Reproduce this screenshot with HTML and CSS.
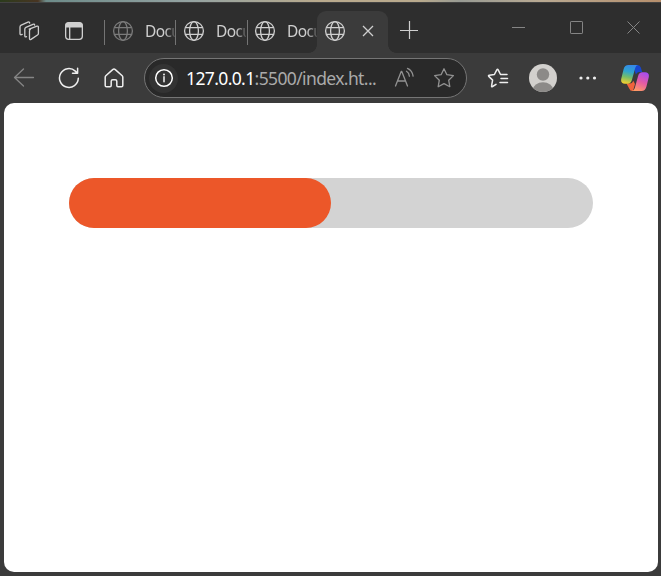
FILE: index.html
```html
<!DOCTYPE html>
<html lang="en">
<head>
<meta charset="utf-8">
<title>Document</title>
<link rel="stylesheet" href="styles.css">
</head>
<body>
<svg class="defs" aria-hidden="true">
  <symbol id="globe" viewBox="0 0 22 22"><g fill="none" stroke="currentColor" stroke-width="1.3"><circle cx="11" cy="11" r="9.4"/><ellipse cx="11" cy="11" rx="4.4" ry="9.4"/><path d="M2.2 7.7h17.6M2.2 14.3h17.6"/></g></symbol>
</svg>
<div class="window">
  <div class="desktop"></div>
  <header class="tabbar">
    <div class="tools">
      <svg class="icon22" viewBox="0 0 22 22"><g fill="none" stroke="currentColor" stroke-width="1.3" stroke-linejoin="round" stroke-linecap="round"><path d="M11.2 9.1 19 6.2q1.4-.4 1.4 1v6.4q0 1-.9 1.4l-6.5 4.4q-1.5.7-1.5-.9V11q0-1.300 1-1.800z"/><path d="M8.500 16.700q-1.700.8-1.700-.9V9q0-1.200 1.100-1.700l7-3q1.500-.6 1.800.8M4.200 14.400q-2.200 1.100-2.200-.9V6.900q0-1.200 1.200-1.800l6.700-3q1.500-.5 1.800.9"/></g></svg>
      <svg class="icon22" viewBox="0 0 22 22"><g fill="none" stroke="currentColor" stroke-width="1.3"><rect x="2.650" y="2.650" width="16.700" height="16.700" rx="3"/><path d="M6.700 7v12"/></g><path d="M2.500 7.400V5.500a3 3 0 0 1 3-3h11a3 3 0 0 1 3 3v1.900z" fill="currentColor"/></svg>
    </div>
    <nav class="tabs">
      <div class="tab dim"><svg class="icon22"><use href="#globe"/></svg><span>Docu</span></div>
      <div class="tab"><svg class="icon22"><use href="#globe"/></svg><span>Docu</span></div>
      <div class="tab"><svg class="icon22"><use href="#globe"/></svg><span>Docu</span></div>
      <div class="tab active"><svg class="icon22"><use href="#globe"/></svg><svg class="close" viewBox="0 0 12 12"><path d="m1 1 10 10M11 1 1 11" stroke="currentColor" stroke-width="1.300"/></svg></div>
    </nav>
    <svg class="plus" viewBox="0 0 18 18"><path d="M9.500 0v18M0 9.500h18" stroke="currentColor" stroke-width="1.200"/></svg>
    <div class="controls">
      <svg viewBox="0 0 14 14"><path d="M0 6.500h13"/></svg>
      <svg viewBox="0 0 14 14"><rect x=".5" y=".5" width="12" height="12" rx=".6"/></svg>
      <svg viewBox="0 0 14 14"><path d="m.5.5 12 12M12.500.5.5 12.500"/></svg>
    </div>
  </header>
  <div class="toolbar">
    <svg class="back" viewBox="0 0 22 22"><path d="M20.500 10.500H1.500M10.500 2l-9 8.500 9 8.500"/></svg>
    <svg class="reload" viewBox="0 0 22 22"><path d="M20.300 11.300a9.400 9.400 0 1 1-3-7.200l2 2M19.600 1.300V6.300H14.500"/></svg>
    <svg class="home" viewBox="0 0 22 22"><path d="m2.800 8.800 6.900-6.200q1.300-1.100 2.600 0l6.900 6.200q.6.600.6 1.400v8.200q0 1.300-1.300 1.300H15q-1.200 0-1.200-1.200v-4.300q0-1.500-1.500-1.500H9.700q-1.500 0-1.500 1.500v4.300q0 1.200-1.200 1.200H3.500q-1.300 0-1.300-1.300v-8.200q0-.8.600-1.400z"/></svg>
    <div class="address">
      <div class="info"><svg viewBox="0 0 20 20"><circle cx="10" cy="10" r="8.300" fill="none" stroke="currentColor" stroke-width="1.500"/><path d="M10 8.800v5" stroke="currentColor" stroke-width="1.400"/><circle cx="10" cy="6.500" r=".9" fill="currentColor"/></svg></div>
      <div class="url"><b>127.0.0.1</b>:5500/index.ht...</div>
      <svg class="read" viewBox="0 0 22 22"><path d="M1.500 19 7.200 4.500h.6L13.500 19M3.500 14h8M12.500 4.200q2.600 1.500 2.900 5M13.500 1.400q4.800 2.100 5.600 7.700"/></svg>
      <svg class="star" viewBox="0 0 22 22"><path d="m11 1.800 2.900 5.900 6.500.9-4.700 4.600 1.100 6.500-5.800-3.100-5.800 3.100 1.100-6.500-4.700-4.600 6.500-.9z"/></svg>
    </div>
    <svg class="favorites" viewBox="0 0 22 22"><path d="M9 17.300 5.500 19.500q-1.200.6-.9-.8l1-5.600L1.800 9.400q-.8-.9.500-1.200l5.100-.7 2.400-4.700q.7-1.200 1.400 0l2.300 4.700h6.500M14 11.500h6.500M13 15.500h7.500"/></svg>
    <svg class="profile" viewBox="0 0 28 28"><clipPath id="face"><circle cx="14" cy="14" r="14"/></clipPath><g clip-path="url(#face)"><path fill="#d2d0cd" d="M0 0h28v28H0z"/><circle cx="14" cy="10.500" r="6.200" fill="#8c8a88"/><ellipse cx="14" cy="25.500" rx="10" ry="7.200" fill="#8c8a88"/></g></svg>
    <svg class="more" viewBox="0 0 18 4"><g fill="currentColor"><circle cx="2" cy="2" r="1.600"/><circle cx="8.800" cy="2" r="1.600"/><circle cx="15.500" cy="2" r="1.600"/></g></svg>
    <svg class="copilot" viewBox="0 0 28 26">
      <defs>
        <linearGradient id="cool" x1=".5" y1="0" x2=".3" y2="1"><stop offset="0" stop-color="#3589e8"/><stop offset=".35" stop-color="#2fa5cf"/><stop offset=".65" stop-color="#75bd68"/><stop offset="1" stop-color="#f3d02f"/></linearGradient>
        <linearGradient id="warm" x1=".7" y1="0" x2=".3" y2="1"><stop offset="0" stop-color="#a64df0"/><stop offset=".5" stop-color="#e45aa5"/><stop offset="1" stop-color="#ff9a65"/></linearGradient>
      </defs>
      <path fill="#1746cf" d="M12 0h4.500q2.600 0 3.300 2.600L21.200 7H18q-2.300 0-3.100 2.500z"/>
      <path fill="#ef633b" d="M5.500 18.500H9q2.500 0 3.300-2.700L14 19l-2 7h-.5q-2.500 0-3.300-2.600z"/>
      <path fill="url(#cool)" d="M7.500 0H17q-2 .2-2.800 3.100l-3.300 12q-1 3.600-4.200 3.600H4Q-.8 18.700.3 13.500L2.600 4.200Q3.700 0 7.500 0z"/>
      <path fill="url(#warm)" d="M20.500 26H11q2-.2 2.800-3.100l3.300-12Q18.100 7.200 21.300 7.200H24q4.800 0 3.700 5.300l-2.300 9.300Q24.300 26 20.500 26z"/>
    </svg>
  </div>
  <main class="page"><div class="progress"><div class="bar"></div></div></main>
</div>
</body>
</html>
```
FILE: styles.css
```css
* { box-sizing: border-box; }
body { margin: 0; font-family: "Noto Sans", "Open Sans", sans-serif; }
svg { display: block; flex: none; }
.defs { position: absolute; width: 0; height: 0; }
.window { width: 661px; height: 576px; display: flex; flex-direction: column; background: #3b3b3b; overflow: hidden; }
.desktop { height: 3px; flex: none; background: linear-gradient(90deg, #2b3b1c 0, #493522 38px, #6d8b89 46px, #94a3a2 190px, #b9aa8d 320px, #b9aa8d 420px, #989b94 460px, #b9aa93 540px, #b68f6c 661px); border-bottom: 1px solid #434343; }
.tabbar { height: 50px; flex: none; display: flex; background: #2e2e2e; color: #cfcfcf; }
.tools { width: 104px; height: 56px; padding-left: 18px; display: flex; align-items: center; gap: 23px; }
.icon22 { width: 22px; height: 22px; }
.tabs { display: grid; grid-template-columns: 71px 72px 70px 71px; height: 50px; }
.tab { height: 25px; margin-top: 17px; padding: 0 0 4px 7px; display: flex; align-items: center; gap: 11px; border-left: 1px solid #747474; }
.tab:nth-child(3) { padding-left: 6px; }
.tab span { width: 30px; flex: none; font-size: 15.5px; line-height: 22px; letter-spacing: -.65px; white-space: nowrap; -webkit-mask-image: linear-gradient(90deg, #000 20px, transparent 32px); mask-image: linear-gradient(90deg, #000 20px, transparent 32px); }
.dim svg { color: #7b7b7b; }
.active { position: relative; height: 42px; margin-top: 8px; border: 0; padding: 0 14px 2px 7px; border-radius: 9px 9px 0 0; background: #3b3b3b; gap: 16px; }
.active::before, .active::after { content: ""; position: absolute; bottom: 0; width: 8px; height: 8px; }
.active::before { left: -8px; background: radial-gradient(circle at 0 0, #2e2e2e 7.500px, #3b3b3b 8px); }
.active::after { right: -8px; background: radial-gradient(circle at 100% 0, #2e2e2e 7.500px, #3b3b3b 8px); }
.close { width: 12px; height: 12px; }
.plus { width: 18px; height: 18px; margin: 18px 0 0 12px; }
.controls { margin: 18px 20px 0 auto; display: flex; gap: 43.5px; fill: none; stroke: #858585; }
.controls svg { width: 14px; height: 14px; }
.toolbar { height: 50px; flex: none; display: flex; align-items: center; padding-left: 13px; color: #eeeeee; fill: none; stroke-linecap: round; stroke-linejoin: round; }
.back, .reload, .home, .favorites, .read, .star { width: 22px; height: 22px; stroke: currentColor; stroke-width: 1.500; }
.back { color: #858585; stroke-width: 1.300; }
.reload { margin-left: 23px; }
.home { margin-left: 23px; }
.address { width: 323px; height: 40px; margin-left: 19px; padding-left: 4px; border: 1px solid #757575; border-radius: 20px; background: #292929; display: flex; align-items: center; color: #aaaaaa; }
.info { width: 29px; height: 29px; border-radius: 50%; background: #333333; color: #fff; display: grid; place-items: center; }
.info svg { width: 20px; height: 20px; }
.url { width: 195px; margin-left: 8px; font-size: 17.5px; line-height: 24px; letter-spacing: -.62px; white-space: nowrap; }
.url b { font-weight: 400; color: #fff; }
.read { margin-left: 13px; stroke-width: 1.300; color: #929292; }
.star { margin-left: 17px; stroke-width: 1.300; color: #929292; }
.favorites { margin-left: 20px; }
.profile { width: 28px; height: 28px; margin-left: 20px; }
.more { width: 18px; height: 4px; margin-left: 22px; }
.copilot { width: 28px; height: 26px; margin-left: 24px; }
.page { width: 654px; height: 469px; margin-left: 4px; padding: 75px 65px 0; border-radius: 10px; background: #fff; }
.progress { width: 524px; height: 50px; border-radius: 25px; background: #d3d3d3; }
.bar { width: 50%; height: 100%; border-radius: 25px; background: #ec5729; }
```
